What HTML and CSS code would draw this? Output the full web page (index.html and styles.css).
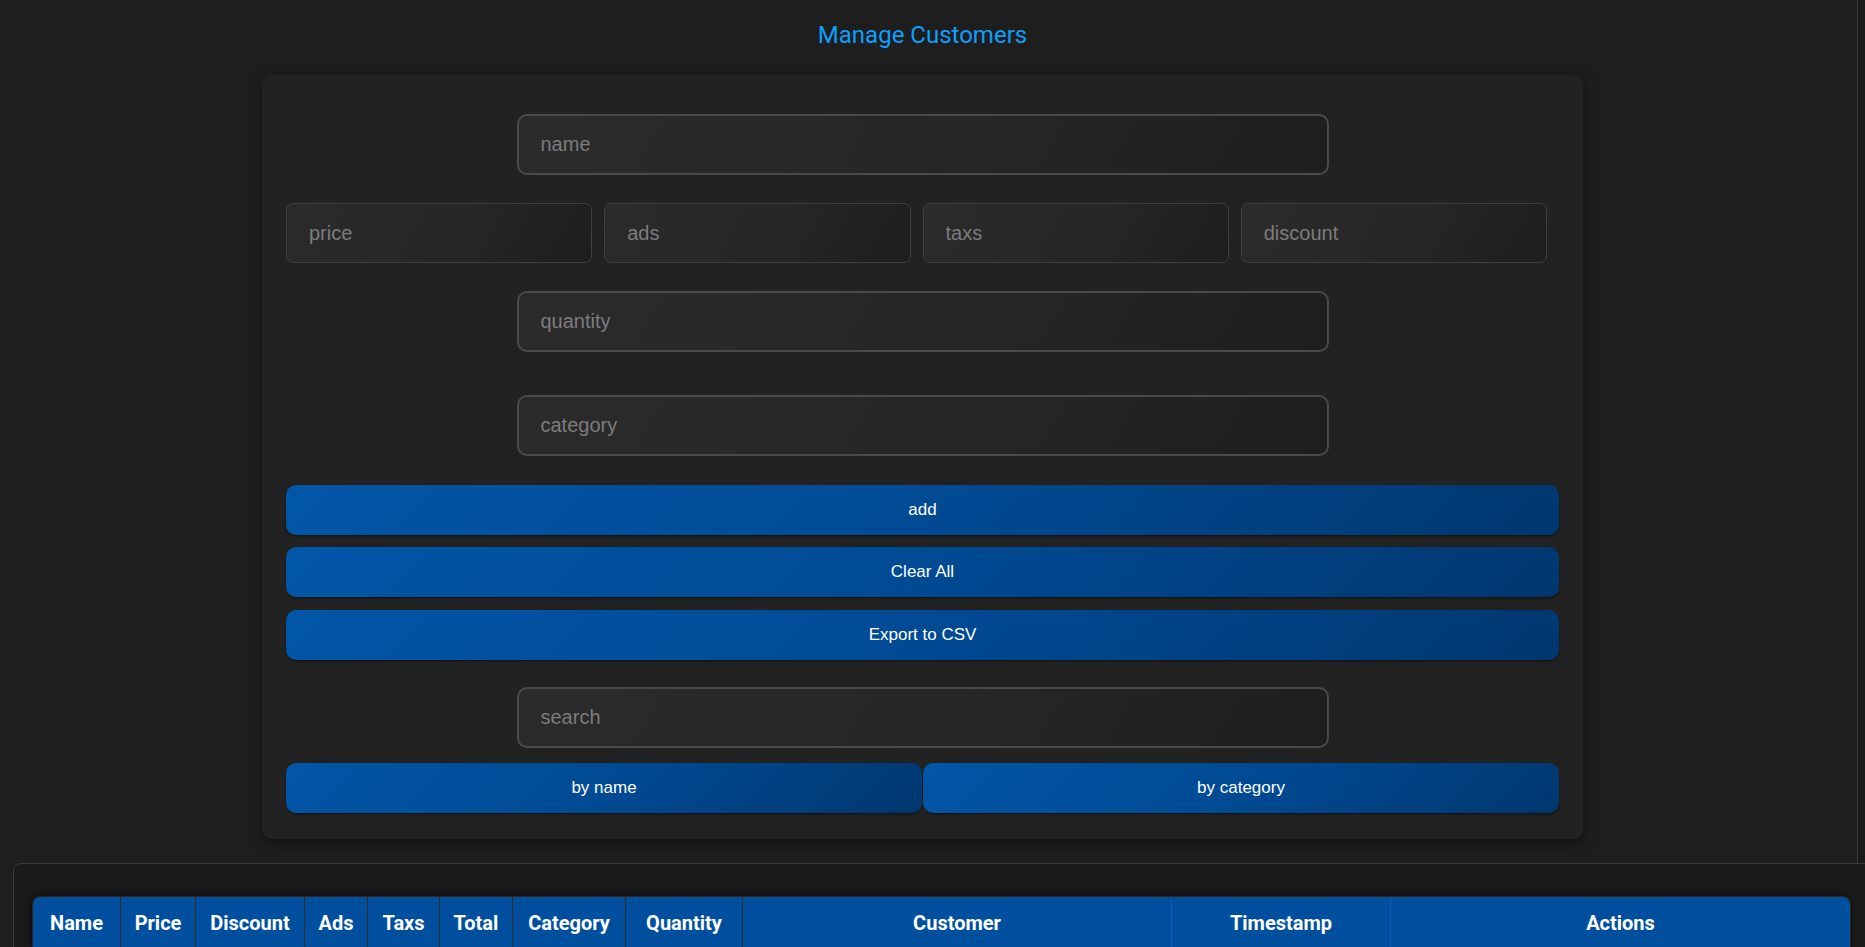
FILE: index.html
```
<!DOCTYPE html>
<html lang="en">
<head>
<meta charset="utf-8">
<title>Manage Customers</title>
<link rel="stylesheet" href="styles.css">
</head>
<body>
<div class="page-top">
  <div class="top-main">
    <div class="top-inner">
      <h1 class="title">Manage Customers</h1>
      <div class="card">
        <input class="field field-wide" type="text" placeholder="name">
        <div class="row4">
          <input class="field field-sm" type="text" placeholder="price">
          <input class="field field-sm" type="text" placeholder="ads">
          <input class="field field-sm" type="text" placeholder="taxs">
          <input class="field field-sm" type="text" placeholder="discount">
        </div>
        <input class="field field-wide qty" type="text" placeholder="quantity">
        <input class="field field-wide cat" type="text" placeholder="category">
        <button class="btn btn-add">add</button>
        <button class="btn btn-clear">Clear All</button>
        <button class="btn btn-export">Export to CSV</button>
        <input class="field field-wide search" type="text" placeholder="search">
        <div class="row2">
          <button class="btn btn-half">by name</button>
          <button class="btn btn-half">by category</button>
        </div>
      </div>
    </div>
  </div>
  <div class="top-gutter"></div>
</div>
<div class="table-wrap">
  <div class="table-box">
    <table class="grid">
      <thead>
        <tr>
          <th class="c-name">Name</th>
          <th class="c-price">Price</th>
          <th class="c-discount">Discount</th>
          <th class="c-ads">Ads</th>
          <th class="c-taxs">Taxs</th>
          <th class="c-total">Total</th>
          <th class="c-category">Category</th>
          <th class="c-quantity">Quantity</th>
          <th class="c-customer blue-sep">Customer</th>
          <th class="c-timestamp blue-sep">Timestamp</th>
          <th class="c-actions blue-sep">Actions</th>
        </tr>
      </thead>
      <tbody></tbody>
    </table>
  </div>
</div>
</body>
</html>
```

FILE: styles.css
```
html, body {
  margin: 0;
  padding: 0;
  background: #1e1e1e;
  overflow: hidden;
}

.page-top {
  display: flex;
}

.top-main {
  width: 1857px;
  flex: none;
  border-right: 1px solid #3a3a3a;
  padding-bottom: 24px;
}

.top-gutter {
  flex: 1;
  background: #1a1a1a;
}

.top-inner {
  width: 1845px;
}

.title {
  margin: 0 0 26px 0;
  padding-top: 21px;
  font-family: Roboto, "Noto Sans", sans-serif;
  font-weight: 400;
  font-size: 24px;
  line-height: 28px;
  color: #0c9ffd;
  text-align: center;
}

.card {
  width: 1321px;
  margin: 0 auto;
  box-sizing: border-box;
  padding: 39px 24px 26px 24px;
  background: #222222;
  border-radius: 10px;
  box-shadow: 0 4px 14px rgba(0, 0, 0, 0.45);
  display: flex;
  flex-direction: column;
}

.field {
  box-sizing: border-box;
  font-family: "Liberation Sans", Arial, sans-serif;
  font-size: 20px;
  color: #cfcfcf;
  padding: 0 22px;
  background: linear-gradient(120deg, #2b2b2b 0%, #262626 55%, #1e1e1e 100%);
  outline: none;
  margin: 0;
}

.field::placeholder {
  color: #7c7c7c;
}

.field-wide {
  width: 812px;
  height: 61px;
  align-self: center;
  border: 2px solid #4a4a4a;
  border-radius: 10px;
}

.row4 {
  display: flex;
  margin-top: 28px;
}

.field-sm {
  flex: 1;
  min-width: 0;
  height: 60px;
  margin-right: 12px;
  border: 1px solid #3f3f3f;
  border-radius: 7px;
}

.qty {
  margin-top: 28px;
}

.cat {
  margin-top: 43px;
}

.btn {
  display: block;
  width: 100%;
  height: 50px;
  margin: 0;
  border: none;
  border-radius: 10px;
  background: linear-gradient(135deg, #0256a7 0%, #004a94 50%, #00376f 100%);
  box-shadow: 0 1px 2px rgba(0, 0, 0, 0.6);
  color: #ffffff;
  font-family: "Liberation Sans", Arial, sans-serif;
  font-size: 17px;
  padding: 0;
}

.btn-add {
  margin-top: 29px;
}

.btn-clear {
  margin-top: 12px;
}

.btn-export {
  margin-top: 13px;
}

.search {
  margin-top: 27px;
}

.row2 {
  display: flex;
  gap: 1px;
  margin-top: 15px;
}

.btn-half {
  flex: 1;
  width: auto;
  min-width: 0;
}

.table-wrap {
  margin-left: 13px;
  width: 1870px;
  box-sizing: border-box;
  border: 1px solid #3a3a3a;
  border-radius: 8px 8px 0 0;
  background: #1a1a1a;
  padding: 32px 0 40px 18px;
}

.table-box {
  width: 1819px;
  box-sizing: border-box;
  border: 1px solid #2d281d;
  border-radius: 8px 8px 0 0;
  overflow: hidden;
  box-shadow: 0 0 6px rgba(0, 0, 0, 0.7);
}

.grid {
  width: 1817px;
  border-collapse: separate;
  border-spacing: 0;
  table-layout: fixed;
}

.grid th {
  box-sizing: border-box;
  background: #004f9f;
  color: #ffffff;
  font-family: Roboto, "Noto Sans", sans-serif;
  font-weight: 700;
  font-size: 20px;
  line-height: 23px;
  padding: 15px 0;
  text-align: center;
  border-left: 1px solid #33302a;
}

.grid th:first-child {
  border-left: none;
}

.grid th.blue-sep {
  border-left-color: #0a5cbe;
}

.grid th.c-customer {
  border-left-color: #33302a;
}

.c-name { width: 87px; }
.c-price { width: 75px; }
.c-discount { width: 109px; }
.c-ads { width: 63px; }
.c-taxs { width: 72px; }
.c-total { width: 73px; }
.c-category { width: 113px; }
.c-quantity { width: 117px; }
.c-customer { width: 429px; }
.c-timestamp { width: 219px; }
.c-actions { width: 460px; }
```
